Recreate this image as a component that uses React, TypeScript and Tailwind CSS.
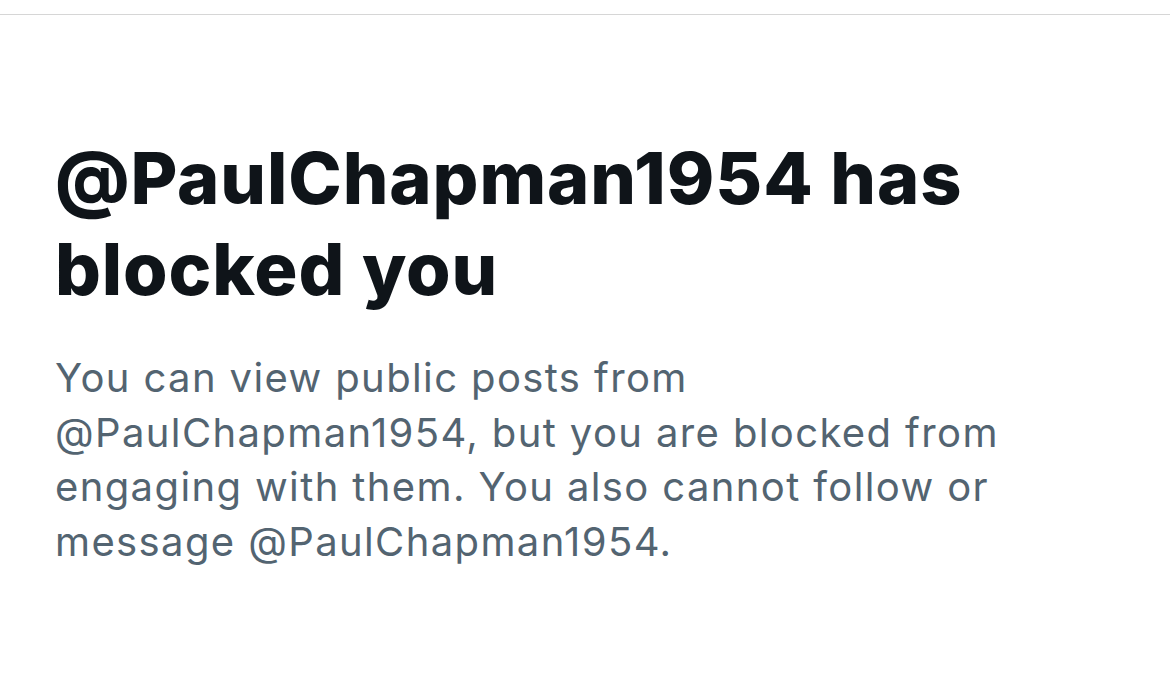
export default function App() {
  return (
    <div className="w-[1170px] h-[675px] bg-white overflow-hidden" style={{ fontFamily: "Inter, 'Noto Sans', sans-serif" }}>
      <div className="h-[15px] border-b border-[#d6d6d6]" />
      <div className="pl-[55px] pt-[117px]">
        <h1 className="text-[72px] leading-[91px] font-extrabold tracking-[0.9px] text-[#0f1419] w-[1050px]">
          @PaulChapman1954 has<br />blocked you
        </h1>
        <p className="mt-[37px] text-[40px] leading-[54.5px] tracking-[1.38px] text-[#536471] w-[1050px]">
          You can view public posts from<br />
          @PaulChapman1954, but you are blocked from<br />
          engaging with them. You also cannot follow or<br />
          message @PaulChapman1954.
        </p>
      </div>
    </div>
  );
}
